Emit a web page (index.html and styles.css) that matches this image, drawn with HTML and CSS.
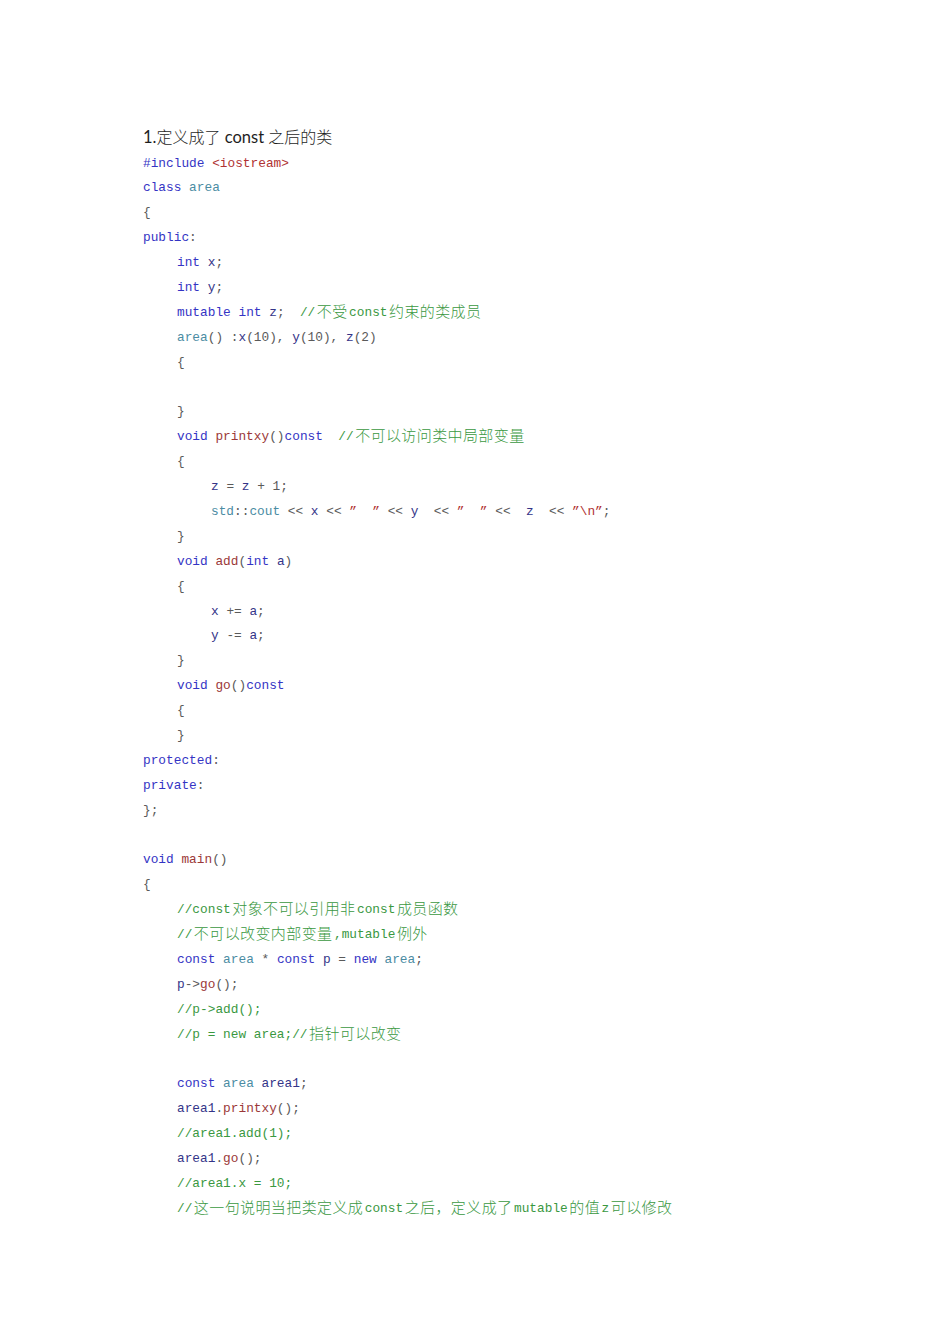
FILE: index.html
```html
<!DOCTYPE html>
<html lang="zh-CN">
<head>
<meta charset="utf-8">
<title>const 类</title>
<link rel="stylesheet" href="styles.css">
</head>
<body>
<div class="page">
  <div class="title">1.<span class="tzh">定义成了</span> const <span class="tzh">之后的类</span></div>
  <div class="code">
    <div class="ln"><span class="k">#include</span> <span class="s">&lt;iostream&gt;</span></div>
    <div class="ln"><span class="k">class</span> <span class="t">area</span></div>
    <div class="ln"><span class="p">{</span></div>
    <div class="ln"><span class="k">public</span><span class="p">:</span></div>
    <div class="ln i1"><span class="k">int</span> <span class="v">x</span><span class="p">;</span></div>
    <div class="ln i1"><span class="k">int</span> <span class="v">y</span><span class="p">;</span></div>
    <div class="ln i1"><span class="k">mutable</span> <span class="k">int</span> <span class="v">z</span><span class="p">;</span>  <span class="c">//<span class="zh">不受</span>const<span class="zh">约束的类成员</span></span></div>
    <div class="ln i1"><span class="t">area</span><span class="p">() :</span><span class="v">x</span><span class="p">(10), </span><span class="v">y</span><span class="p">(10), </span><span class="v">z</span><span class="p">(2)</span></div>
    <div class="ln i1"><span class="p">{</span></div>
    <div class="ln"></div>
    <div class="ln i1"><span class="p">}</span></div>
    <div class="ln i1"><span class="k">void</span> <span class="f">printxy</span><span class="p">()</span><span class="k">const</span>  <span class="c">//<span class="zh">不可以访问类中局部变量</span></span></div>
    <div class="ln i1"><span class="p">{</span></div>
    <div class="ln i2"><span class="v">z</span> <span class="p">=</span> <span class="v">z</span> <span class="p">+ 1;</span></div>
    <div class="ln i2"><span class="t">std</span><span class="p">::</span><span class="t">cout</span> <span class="p">&lt;&lt;</span> <span class="v">x</span> <span class="p">&lt;&lt;</span> <span class="s">”  ”</span> <span class="p">&lt;&lt;</span> <span class="v">y</span>  <span class="p">&lt;&lt;</span> <span class="s">”  ”</span> <span class="p">&lt;&lt;</span>  <span class="v">z</span>  <span class="p">&lt;&lt;</span> <span class="s">”\n”</span><span class="p">;</span></div>
    <div class="ln i1"><span class="p">}</span></div>
    <div class="ln i1"><span class="k">void</span> <span class="f">add</span><span class="p">(</span><span class="k">int</span> <span class="v">a</span><span class="p">)</span></div>
    <div class="ln i1"><span class="p">{</span></div>
    <div class="ln i2"><span class="v">x</span> <span class="p">+=</span> <span class="v">a</span><span class="p">;</span></div>
    <div class="ln i2"><span class="v">y</span> <span class="p">-=</span> <span class="v">a</span><span class="p">;</span></div>
    <div class="ln i1"><span class="p">}</span></div>
    <div class="ln i1"><span class="k">void</span> <span class="f">go</span><span class="p">()</span><span class="k">const</span></div>
    <div class="ln i1"><span class="p">{</span></div>
    <div class="ln i1"><span class="p">}</span></div>
    <div class="ln"><span class="k">protected</span><span class="p">:</span></div>
    <div class="ln"><span class="k">private</span><span class="p">:</span></div>
    <div class="ln"><span class="p">};</span></div>
    <div class="ln"></div>
    <div class="ln"><span class="k">void</span> <span class="f">main</span><span class="p">()</span></div>
    <div class="ln"><span class="p">{</span></div>
    <div class="ln i1"><span class="c">//const<span class="zh">对象不可以引用非</span>const<span class="zh">成员函数</span></span></div>
    <div class="ln i1"><span class="c">//<span class="zh">不可以改变内部变量</span>,mutable<span class="zh">例外</span></span></div>
    <div class="ln i1"><span class="k">const</span> <span class="t">area</span> <span class="p">*</span> <span class="k">const</span> <span class="v">p</span> <span class="p">=</span> <span class="k">new</span> <span class="t">area</span><span class="p">;</span></div>
    <div class="ln i1"><span class="v">p</span><span class="p">-&gt;</span><span class="f">go</span><span class="p">();</span></div>
    <div class="ln i1"><span class="c">//p-&gt;add();</span></div>
    <div class="ln i1"><span class="c">//p = new area;//<span class="zh">指针可以改变</span></span></div>
    <div class="ln"></div>
    <div class="ln i1"><span class="k">const</span> <span class="t">area</span> <span class="v">area1</span><span class="p">;</span></div>
    <div class="ln i1"><span class="v">area1</span><span class="p">.</span><span class="f">printxy</span><span class="p">();</span></div>
    <div class="ln i1"><span class="c">//area1.add(1);</span></div>
    <div class="ln i1"><span class="v">area1</span><span class="p">.</span><span class="f">go</span><span class="p">();</span></div>
    <div class="ln i1"><span class="c">//area1.x = 10;</span></div>
    <div class="ln i1"><span class="c">//<span class="zh">这一句说明当把类定义成</span>const<span class="zh">之后，定义成了</span>mutable<span class="zh">的值</span>z<span class="zh">可以修改</span></span></div>
  </div>
</div>
</body>
</html>
```
FILE: styles.css
```css
html, body {
  margin: 0;
  padding: 0;
  background: #ffffff;
}

.page {
  width: 950px;
  min-height: 1344px;
  box-sizing: border-box;
  padding: 124px 0 0 143px;
}

.title {
  height: 25px;
  line-height: 25px;
  font-family: "Lato", "Noto Sans CJK SC", sans-serif;
  font-size: 16.5px;
  color: #1e1e1e;
  white-space: pre;
}

.tzh {
  font-family: "Noto Sans CJK SC", sans-serif;
  font-size: 16px;
  font-weight: 300;
}

.code {
  padding-top: 2.5px;
  font-family: "Liberation Mono", monospace;
  font-size: 12.8px;
  color: #444;
}

.ln {
  height: 24.9px;
  line-height: 24.9px;
  white-space: pre;
  overflow: visible;
}

.i1 { padding-left: 34px; }
.i2 { padding-left: 68px; }

.k { color: #3434c4; }
.t { color: #4b8ca3; }
.f { color: #9b3838; }
.s { color: #b03232; }
.c { color: #3a983f; }
.v { color: #343488; }
.p { color: #5a5a5a; }

.zh {
  font-family: "Noto Sans CJK SC", sans-serif;
  font-size: 15px;
  font-weight: 300;
  line-height: 15px;
  padding: 0 1.5px;
  letter-spacing: 0.4px;
  vertical-align: -1px;
}
```
